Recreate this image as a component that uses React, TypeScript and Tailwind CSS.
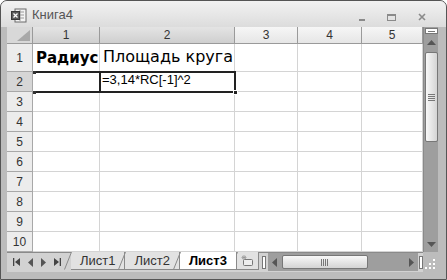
const cols = [
  { n: '1', w: 'w-[67px]', sel: true },
  { n: '2', w: 'w-[135px]', sel: true },
  { n: '3', w: 'w-[63px]', sel: false },
  { n: '4', w: 'w-[64px]', sel: false },
  { n: '5', w: 'w-[61px]', sel: false },
];

const rows = ['1', '2', '3', '4', '5', '6', '7', '8', '9', '10'];

function ExcelIcon() {
  return (
    <svg width="16" height="15" viewBox="0 0 16 15">
      <rect x="4" y="1" width="11" height="13" fill="#f4f4f4" stroke="#6a6a6a" />
      <path d="M6 4h7M6 7h7M6 10h7M9 2v11" stroke="#9a9a9a" strokeWidth="1" />
      <rect x="0.5" y="3.5" width="8" height="8" fill="#5c5c5c" stroke="#3a3a3a" />
      <path d="M2.5 5.5l4 4M6.5 5.5l-4 4" stroke="#fff" strokeWidth="1.3" />
    </svg>
  );
}

function Tri({ dir }: { dir: 'up' | 'down' | 'left' | 'right' }) {
  const d = {
    up: 'M0 5L4.5 0L9 5Z',
    down: 'M0 0L9 0L4.5 5Z',
    left: 'M5 0L5 9L0 4.5Z',
    right: 'M0 0L5 4.5L0 9Z',
  }[dir];
  const vert = dir === 'up' || dir === 'down';
  return (
    <svg width={vert ? 9 : 5} height={vert ? 5 : 9} viewBox={vert ? '0 0 9 5' : '0 0 5 9'}>
      <path d={d} fill="#555" />
    </svg>
  );
}

function Slant() {
  return (
    <svg className="absolute -left-[7px] top-0" width="8" height="18" viewBox="0 0 8 18">
      <path d="M7.5 0L0.5 17.5" stroke="#8a8a8a" fill="none" />
    </svg>
  );
}

function Tab({ label, active }: { label: string; active?: boolean }) {
  return (
    <div
      className={`relative h-[18px] -mt-px flex items-center px-[9px] border-b border-r border-[#8a8a8a] ${
        active ? 'bg-white font-bold text-black z-10' : 'bg-[#e2e2e2] text-[#333]'
      }`}
    >
      <Slant />
      {label}
    </div>
  );
}

export default function App() {
  return (
    <div className="w-[447px] h-[280px] bg-[#bcbcbc] border border-[#555] rounded-t-[7px] overflow-hidden flex flex-col font-['Liberation_Sans',Arial,sans-serif]">
      {/* title bar */}
      <div className="h-[26px] shrink-0 flex items-center bg-gradient-to-b from-[#f2f2f2] to-[#dcdcdc]">
        <div className="ml-[10px] mr-[5px] mt-[2px]">
          <ExcelIcon />
        </div>
        <span className="text-[13px] text-[#555] mt-[1px]">Книга4</span>
        <div className="ml-auto flex items-center gap-[22px] mr-[20px] mt-[6px]">
          <div className="w-[6px] h-[2px] bg-[#8a8a8a] mt-[6px]" />
          <div className="w-[9px] h-[7px] border border-[#8a8a8a] border-t-2" />
          <svg width="8" height="8" viewBox="0 0 8 8">
            <path d="M1 1L7 7M7 1L1 7" stroke="#8a8a8a" strokeWidth="1.6" />
          </svg>
        </div>
      </div>

      <div className="flex shrink-0 pl-[6px] pr-[8px]">
        <div className="w-[416px] flex flex-col">
          {/* grid */}
          <div className="relative bg-white">
            <div className="flex h-[17px]">
              <div className="w-[26px] border-r border-b border-[#9a9a9a] bg-[#d8d8d8] flex items-end justify-end p-[2px]">
                <svg width="13" height="11" viewBox="0 0 13 11">
                  <path d="M13 0V11H0Z" fill="#a8a8a8" />
                </svg>
              </div>
              {cols.map((c) => (
                <div
                  key={c.n}
                  className={`${c.w} border-r border-b border-[#9a9a9a] flex items-center justify-center text-[12px] text-[#333] ${
                    c.sel ? 'bg-gradient-to-b from-[#e4e4e4] to-[#cfcfcf]' : 'bg-gradient-to-b from-[#f6f6f6] to-[#e6e6e6]'
                  }`}
                >
                  {c.n}
                </div>
              ))}
            </div>
            {rows.map((r) => (
              <div key={r} className={`flex ${r === '1' ? 'h-[28px]' : 'h-[20px]'}`}>
                <div
                  className={`w-[26px] border-r border-b border-[#a8a8a8] flex items-center justify-center text-[12px] text-[#333] ${
                    r === '2' ? 'bg-[#d6d6d6]' : 'bg-[#ececec]'
                  }`}
                >
                  {r}
                </div>
                {cols.map((c, i) => (
                  <div
                    key={c.n}
                    className={`${c.w} border-r border-b border-[#d4d4d4] flex items-end overflow-visible whitespace-nowrap`}
                  >
                    {r === '1' && i === 0 && (
                      <span className="pl-[3px] pb-[2px] text-[15px] font-bold text-black font-['DejaVu_Sans',sans-serif]">
                        Радиус
                      </span>
                    )}
                    {r === '1' && i === 1 && (
                      <span className="pl-[3px] pb-[2px] text-[16px] text-black font-['DejaVu_Sans',sans-serif]">
                        Площадь круга
                      </span>
                    )}
                    {r === '2' && i === 1 && (
                      <span className="pl-[2px] pb-[2px] text-[13px] text-black">=3,14*RC[-1]^2</span>
                    )}
                  </div>
                ))}
              </div>
            ))}
            {/* selection */}
            <div className="absolute left-[28px] top-[44px] w-[201px] h-[2px] bg-[#222]" />
            <div className="absolute left-[28px] top-[64px] w-[201px] h-[2px] bg-[#222]" />
            <div className="absolute left-[26px] top-[44px] w-[3px] h-[3px] bg-[#333]" />
            <div className="absolute left-[26px] top-[64px] w-[3px] h-[3px] bg-[#333]" />
            <div className="absolute left-[92px] top-[44px] w-[2px] h-[22px] bg-[#222]" />
            <div className="absolute left-[227px] top-[44px] w-[2px] h-[20px] bg-[#222]" />
            <div className="absolute left-[226px] top-[63px] w-[5px] h-[5px] bg-[#222] border border-white" />
          </div>

          {/* sheet tabs + horizontal scroll */}
          <div className="h-[20px] flex items-start bg-[#d2d2d2] border-t border-[#8a8a8a] text-[13px]">
            <div className="flex items-center h-[18px] pl-[6px] gap-[8px] w-[64px]">
              <svg width="7" height="8" viewBox="0 0 7 8">
                <path d="M0 0h1.3v8H0zM7 0v8L2 4z" fill="#444" />
              </svg>
              <Tri dir="left" />
              <Tri dir="right" />
              <svg width="7" height="8" viewBox="0 0 7 8">
                <path d="M0 0v8l5-4zM5.7 0H7v8H5.7z" fill="#444" />
              </svg>
            </div>
            <div className="flex">
              <Tab label="Лист1" />
              <Tab label="Лист2" />
              <Tab label="Лист3" active />
              <div className="relative w-[22px] h-[18px] -mt-px flex items-center justify-center bg-[#e2e2e2] border-b border-r border-[#8a8a8a]">
                <Slant />
                <svg width="14" height="12" viewBox="0 0 14 12">
                  <rect x="3.5" y="4.5" width="9" height="6" rx="1" fill="#eee" stroke="#777" />
                  <path d="M4 0v5M1.5 2.5h5M2 1l4 3M6 1L2 4" stroke="#999" strokeWidth="0.8" />
                </svg>
              </div>
            </div>
            <div className="ml-[3px] mt-[3px] w-[4px] h-[13px] bg-white border border-[#777]" />
            <div className="flex-1 flex items-center h-[18px] bg-[#9e9e9e] ml-[2px] px-[4px]">
              <Tri dir="left" />
              <div className="ml-[5px] w-[86px] h-[14px] rounded-[2px] bg-gradient-to-b from-[#f8f8f8] to-[#d4d4d4] border border-[#777] flex items-center justify-center gap-[1px]">
                <div className="w-px h-[7px] bg-[#777]" />
                <div className="w-px h-[7px] bg-[#777]" />
                <div className="w-px h-[7px] bg-[#777]" />
                <div className="w-px h-[7px] bg-[#777]" />
              </div>
              <div className="ml-auto">
                <Tri dir="right" />
              </div>
            </div>
            <div className="ml-[1px] mt-[3px] w-[4px] h-[13px] bg-white border border-[#777]" />
          </div>
        </div>

        {/* vertical scroll */}
        <div className="w-[15px] flex flex-col">
          <div className="h-[225px] flex flex-col items-center bg-[#9e9e9e] border-l border-[#8a8a8a]">
            <div className="w-[13px] h-[6px] mt-px bg-white border border-[#777] flex items-center justify-center">
              <div className="w-[7px] h-px bg-[#777]" />
            </div>
            <div className="h-[16px] flex items-center">
              <Tri dir="up" />
            </div>
            <div className="w-[13px] h-[90px] mt-[2px] rounded-[2px] bg-gradient-to-r from-[#f8f8f8] to-[#d4d4d4] border border-[#777] flex flex-col items-center justify-center gap-[1px]">
              <div className="w-[7px] h-px bg-[#777]" />
              <div className="w-[7px] h-px bg-[#777]" />
              <div className="w-[7px] h-px bg-[#777]" />
              <div className="w-[7px] h-px bg-[#777]" />
            </div>
            <div className="mt-auto mb-[5px]">
              <Tri dir="down" />
            </div>
          </div>
          <div className="h-[20px] bg-[#bcbcbc] flex items-end justify-end p-[2px]">
            <svg width="11" height="11" viewBox="0 0 11 11">
              <path d="M8 0h2v2H8zM4 4h2v2H4zM8 4h2v2H8zM0 8h2v2H0zM4 8h2v2H4zM8 8h2v2H8z" fill="#fff" />
            </svg>
          </div>
        </div>
      </div>
      <div className="flex-1" />
    </div>
  );
}
